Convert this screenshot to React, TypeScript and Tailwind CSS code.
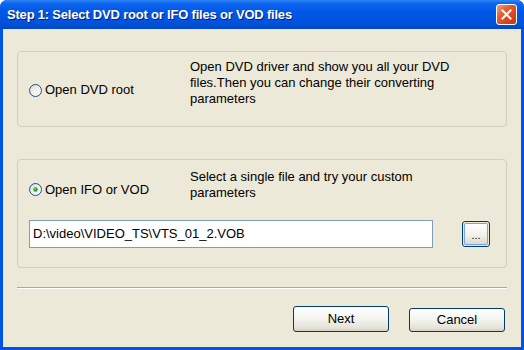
import React from "react";

function Radio({ checked }: { checked?: boolean }) {
  return (
    <svg width="13" height="13" viewBox="0 0 13 13" className="shrink-0">
      <defs>
        <linearGradient id={checked ? "rg1" : "rg0"} x1="0" y1="0" x2="1" y2="1">
          <stop offset="0" stopColor="#DCDCD7" />
          <stop offset="0.6" stopColor="#F3F3EF" />
          <stop offset="1" stopColor="#FFFFFF" />
        </linearGradient>
      </defs>
      <circle cx="6.5" cy="6.5" r="6" fill={`url(#${checked ? "rg1" : "rg0"})`} stroke="#1C5180" strokeWidth="1" />
      {checked && <circle cx="6.5" cy="6.5" r="2.2" fill="#21A121" />}
      {checked && <circle cx="6" cy="6" r="0.9" fill="#6EDC6E" />}
    </svg>
  );
}

export default function App() {
  const font = { fontFamily: '"Liberation Sans", Arial, sans-serif' };
  return (
    <div className="w-[524px] h-[350px] flex flex-col bg-[#0054E3] rounded-t-[7px] overflow-hidden" style={font}>
      {/* Title bar */}
      <div className="h-[29px] shrink-0 flex items-center justify-between pl-[7px] pr-[7px] bg-[linear-gradient(to_bottom,#2E86F5_0%,#0C64EE_12%,#0058E6_40%,#0055E0_70%,#0049C8_100%)]">
        <span className="text-white font-bold text-[13px] tracking-[-0.2px] [text-shadow:1px_1px_0_#0A1E6E]" style={{ fontFamily: '"Liberation Sans", Arial, sans-serif' }}>
          Step 1: Select DVD root or IFO files or VOD files
        </span>
        <div className="w-[21px] h-[21px] rounded-[3px] border border-white bg-[linear-gradient(135deg,#F0A08A_0%,#E2603A_35%,#D8441C_70%,#C03A12_100%)] flex items-center justify-center">
          <svg width="11" height="11" viewBox="0 0 11 11">
            <path d="M1.5 1.5 L9.5 9.5 M9.5 1.5 L1.5 9.5" stroke="white" strokeWidth="2" strokeLinecap="square" />
          </svg>
        </div>
      </div>
      {/* Client */}
      <div className="flex-1 mx-[3px] mb-[3px] bg-[#ECE9D8] flex flex-col px-[14px] pt-[22px] text-[13px] text-black">
        {/* Group 1 */}
        <div className="h-[76px] border border-[#D0D0BF] rounded-[4px] flex">
          <div className="w-[172px] shrink-0 flex items-center gap-[3px] pl-[11px] pt-[2px]">
            <Radio />
            <span>Open DVD root</span>
          </div>
          <div className="pt-[7px] leading-[16px] w-[290px]">
            Open DVD driver and show you all your DVD files.Then you can change their converting parameters
          </div>
        </div>
        {/* Group 2 */}
        <div className="mt-[32px] h-[109px] border border-[#D0D0BF] rounded-[4px] flex flex-col">
          <div className="flex">
            <div className="w-[172px] shrink-0 flex items-center gap-[3px] pl-[11px] pt-[19px] self-start h-[40px]">
              <Radio checked />
              <span>Open IFO or VOD</span>
            </div>
            <div className="pt-[9px] leading-[16px] w-[280px]">
              Select a single file and try your custom parameters
            </div>
          </div>
          <div className="flex items-center pl-[11px] mt-[19px]">
            <div className="w-[404px] h-[28px] bg-white border border-[#7F9DB9] flex items-center pl-[3px]">
              {"D:\\video\\VIDEO_TS\\VTS_01_2.VOB"}
            </div>
            <div className="ml-[29px] w-[28px] h-[26px] rounded-[3px] border border-[#003C74] p-[1px] bg-[#ECE9D8]">
              <div className="w-full h-full rounded-[2px] border border-[#7BA2E7] bg-[linear-gradient(to_bottom,#FFFFFF,#F0F0EA_60%,#DCD8CC)] flex items-end justify-center pb-[3px] text-[11px] leading-none">
                ...
              </div>
            </div>
          </div>
        </div>
        {/* Separator */}
        <div className="mt-[19px] h-[2px] border-t border-[#ACA899] border-b border-b-white" />
        {/* Buttons */}
        <div className="mt-[17px] flex justify-end items-end gap-[20px] pr-[2px]">
          <div className="w-[96px] h-[26px] rounded-[3px] border border-[#003C74] bg-[linear-gradient(to_bottom,#FFFFFF,#F3F3EF_50%,#E6E3D9_85%,#D6D0C5)] flex items-center justify-center">
            Next
          </div>
          <div className="w-[96px] h-[24px] rounded-[3px] border border-[#003C74] bg-[linear-gradient(to_bottom,#FFFFFF,#F3F3EF_50%,#E6E3D9_85%,#D6D0C5)] flex items-center justify-center">
            Cancel
          </div>
        </div>
      </div>
    </div>
  );
}
